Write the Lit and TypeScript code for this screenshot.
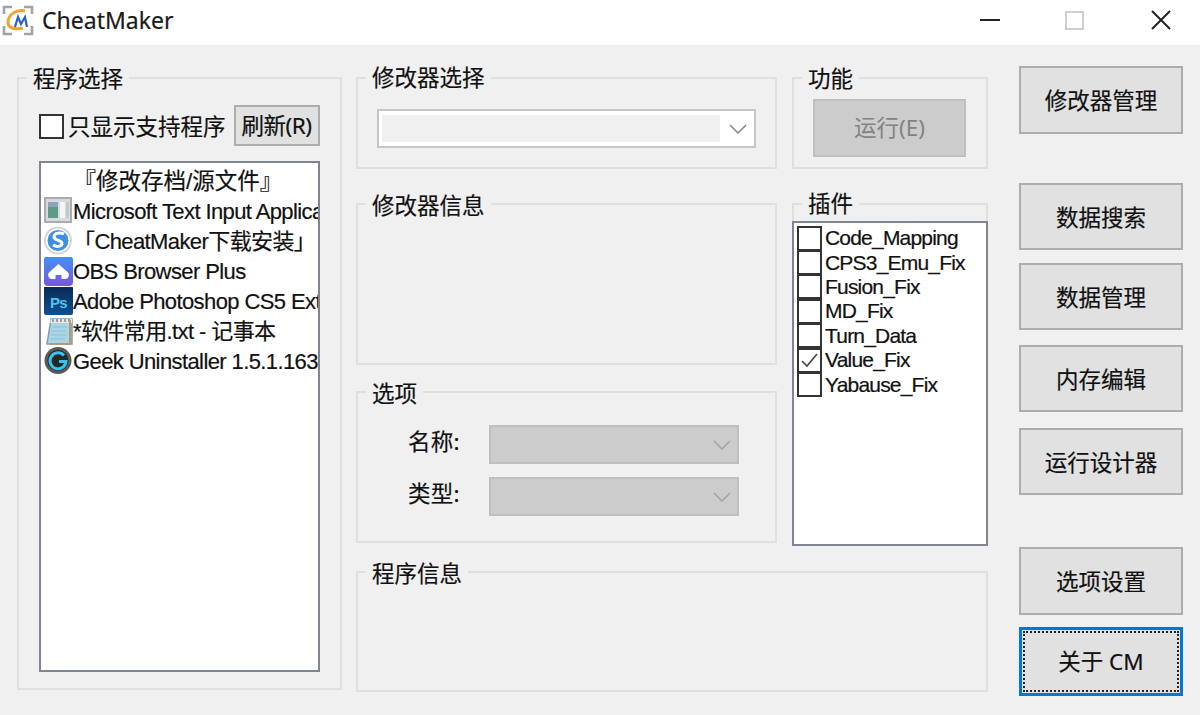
import { LitElement, html, css, svg } from "lit";
import { customElement } from "lit/decorators.js";

const logo = html`<svg class="logo" viewBox="0 0 32 32" width="32" height="32">
  <path d="M2 10V3h8M22 3h8v7M30 22v8h-8M10 30H2v-8" fill="none" stroke="#a3a3a3" stroke-width="2.6"/>
  <path d="M23 7C14 5 6 11 6 18c0 6 6 8 15 6" fill="none" stroke="#f2a32c" stroke-width="3"/>
  <path d="M13 23l3-10 3 7 4-7 2 10" fill="none" stroke="#2d5fc0" stroke-width="2.2"/>
</svg>`;

const icons: Record<string, unknown> = {
  ms: svg`<rect x="1" y="2" width="26" height="24" fill="#d8dadd" stroke="#a9adb2" stroke-width="2"/>
    <rect x="4" y="6" width="10" height="16" fill="#5f9a86"/><rect x="4" y="6" width="10" height="5" fill="#8aa7b8"/>
    <rect x="16" y="6" width="5" height="16" fill="#f4f6f6"/><rect x="22" y="6" width="3" height="16" fill="#c4c8cb"/>`,
  so: svg`<circle cx="14" cy="14.500" r="13" fill="#fff" stroke="#d6d6d6" stroke-width="2"/><circle cx="14" cy="14.500" r="10.500" fill="#3d8fe0"/>
    <path d="M20 8c-4-2-10-1-10 3s9 3 8 7c-1 3-6 3-9 1" fill="none" stroke="#fff" stroke-width="3"/>`,
  obs: svg`<defs><linearGradient id="g1" x1="0" y1="0" x2="0" y2="1"><stop offset="0" stop-color="#3f93f5"/><stop offset="1" stop-color="#7a55e0"/></linearGradient></defs>
    <rect x="0" y="0" width="29" height="30" rx="4" fill="url(#g1)"/>
    <path d="M14.500 8l-9 8a4 4 0 0 0 2 7h4v-4h6v4h4a4 4 0 0 0 2-7z" fill="#fff"/>`,
  ps: svg`<defs><linearGradient id="g2" x1="0" y1="0" x2="0" y2="1"><stop offset="0" stop-color="#072a52"/><stop offset="1" stop-color="#0e4f92"/></linearGradient></defs>
    <rect x="0" y="0" width="29" height="29" rx="2" fill="url(#g2)"/>
    <text x="14.500" y="22" text-anchor="middle" font-family="Liberation Sans" font-weight="700" font-size="15" fill="#52c3f1">Ps</text>`,
  np: svg`<path d="M7 3h21v25H3z" fill="#a9d6e6" stroke="#8a9aa0" stroke-width="1.500"/><path d="M7 3h21v4H6z" fill="#e8e8e8"/>
    <path d="M9 3v3M13 3v3M17 3v3M21 3v3M25 3v3" stroke="#555" stroke-width="1"/>
    <path d="M26 4v24H6" fill="none" stroke="#b89b6c" stroke-width="2"/>
    <path d="M8 11h15M7 15h15M7 19h15M6 23h15" stroke="#8fbfd0" stroke-width="1"/>`,
  g: svg`<circle cx="14" cy="14.500" r="13.500" fill="#5a5a5a"/><circle cx="14" cy="14.500" r="10.500" fill="#262626"/>
    <path d="M20 9.500a8 8 0 1 0 2 6h-7" fill="none" stroke="#35c3f0" stroke-width="3"/>`,
};

const programs = [
  { text: "「CheatMaker下载安装」", icon: "so" },
  { text: "OBS Browser Plus", icon: "obs" },
  { text: "Adobe Photoshop CS5 Extended", icon: "ps" },
  { text: "*软件常用.txt - 记事本", icon: "np" },
  { text: "Geek Uninstaller 1.5.1.163", icon: "g" },
];

const plugins = ["Code_Mapping", "CPS3_Emu_Fix", "Fusion_Fix", "MD_Fix", "Turn_Data", "Value_Fix", "Yabause_Fix"];

const actions = [
  { text: "修改器管理", gap: 0, h: 68 },
  { text: "数据搜索", gap: 49, h: 67 },
  { text: "数据管理", gap: 13, h: 67 },
  { text: "内存编辑", gap: 15, h: 67 },
  { text: "运行设计器", gap: 16, h: 67 },
  { text: "选项设置", gap: 52, h: 68 },
  { text: "关于 CM", gap: 12, h: 69, focus: true },
];

const chevron = html`<svg class="chev" viewBox="0 0 18 10" width="18" height="10"><path d="M1 1l8 8 8-8" fill="none" stroke="currentColor" stroke-width="1.600"/></svg>`;

@customElement("app-root")
export class AppRoot extends LitElement {
  static styles = css`
    :host { display: block; width: 1200px; height: 715px; overflow: hidden; background: #f0f0f0;
      font-family: "Noto Sans", "Noto Sans CJK SC", sans-serif; font-size: 22px; color: #111; line-height: 30px;
      -webkit-text-stroke: 0.2px currentColor; }
    * { box-sizing: border-box; }
    .title { height: 45px; background: #fff; display: flex; align-items: center; padding-left: 2px; }
    .logo { flex: none; margin-top: -5px; }
    .app-name { margin-left: 8px; font-size: 23px; margin-top: -6px; color: #1a1a1a; }
    .win { margin-left: auto; display: flex; align-items: center; margin-top: -5px; }
    .wbtn { display: block; }
    .wmin { margin-right: 65px; }
    .wmax { margin-right: 67px; }
    .wclose { margin-right: 29px; }
    .body { display: flex; padding: 32px 17px 0; height: 670px; }
    .group { position: relative; border: 2px solid #dfdfdf; }
    .legend { position: absolute; left: 8px; top: -15px; padding: 0 6px; background: #f0f0f0; font-size: 22.500px; white-space: nowrap; }
    .legend.hi { top: -16px; }
    .legend.lo { top: -14px; }
    .left { width: 325px; height: 613px; flex: none; padding: 20px 20px 0 20px; }
    .filter { display: flex; align-items: center; height: 41px; margin-top: 6px; }
    .cb { width: 25px; height: 25px; border: 2px solid #333; background: #fff; flex: none; display: block; }
    .filter .cb { margin-top: 1px; }
    .filter-label { margin-left: 4px; font-size: 22.500px; margin-top: 2px; }
    .btn { background: #e1e1e1; border: 2px solid #adadad; display: flex; align-items: center; justify-content: center; font-size: 22.500px; }
    .refresh { width: 86px; height: 41px; margin-left: 8px; white-space: nowrap; letter-spacing: -0.500px; }
    .list { margin-top: 15px; height: 511px; width: 281px; background: #fff; border: 2px solid #80858f; padding-top: 4px; overflow: hidden; }
    .row { height: 30px; display: flex; align-items: center; white-space: nowrap; overflow: hidden; padding-left: 3px;
      font-family: "Liberation Sans", "Noto Sans CJK SC", sans-serif; font-size: 22px; letter-spacing: -0.600px; }
    .row.center { justify-content: center; padding-left: 0; padding-right: 3px; font-size: 22.500px; letter-spacing: 0; }
    .row svg { flex: none; width: 29px; height: 30px; margin-top: -2px; }
    .center-col { width: 632px; margin-left: 14px; flex: none; display: flex; flex-direction: column; }
    .top { display: flex; gap: 15px; height: 469px; }
    .mid { width: 421px; flex: none; display: flex; flex-direction: column; }
    .side { width: 196px; flex: none; display: flex; flex-direction: column; }
    .sel-group { height: 92px; padding: 30px 19px 0; }
    .combo { height: 39px; width: 379px; border: 2px solid #c6c6c6; background: #fff; padding: 3px; display: flex; align-items: center; color: #8a8a8a; }
    .combo-fill { width: 338px; height: 27px; background: #f0f0f0; flex: none; }
    .combo .chev { margin-left: 9px; }
    .info { height: 162px; margin-top: 34px; }
    .options { height: 152px; margin-top: 26px; padding: 32px 0 0 50px; display: flex; flex-direction: column; gap: 13px; }
    .opt { display: flex; align-items: center; height: 39px; }
    .opt-label { width: 81px; font-size: 22.500px; margin-top: -6px; letter-spacing: 0.300px; }
    .disabled-combo { width: 250px; height: 39px; background: #ccc; border: 2px solid #bfbfbf; display: flex; align-items: center; justify-content: flex-end; padding-right: 6px; color: #a5a5a5; }
    .func { height: 92px; padding: 20px 0 0 19px; }
    .run { width: 153px; height: 58px; background: #ccc; border: 2px solid #bfbfbf; color: #838383; -webkit-text-stroke: 0; }
    .plug-wrap { margin-top: 34px; height: 343px; padding-top: 16px; border-bottom: none; }
    .plug-list { margin: 0 -2px; height: 325px; background: #fff; border: 2px solid #80858f; padding: 3px 0 0 3px; }
    .plug { height: 24.400px; display: flex; align-items: center; white-space: nowrap; font-size: 21px; line-height: 24px;
      letter-spacing: -0.800px; font-family: "Liberation Sans", "Noto Sans CJK SC", sans-serif; }
    .plug .cb { margin-right: 3px; }
    .plug .cb svg { display: block; }
    .prog { height: 121px; margin-top: 25px; }
    .actions { width: 164px; margin-left: 31px; margin-top: -11px; flex: none; display: flex; flex-direction: column; }
    .act { width: 164px; flex: none; position: relative; padding-top: 2px; }
    .act.focus { border: 3px solid #0078d7; padding-top: 0; }
    .act.focus::after { content: ""; position: absolute; inset: 1px; border: 2px dotted #222; }
  `;

  render() {
    return html`
      <div class="title">
        ${logo}
        <span class="app-name">CheatMaker</span>
        <div class="win">
          <svg class="wbtn wmin" width="20" height="4" viewBox="0 0 20 4"><path d="M0 2h20" stroke="#222" stroke-width="2"/></svg>
          <svg class="wbtn wmax" width="19" height="19" viewBox="0 0 19 19"><rect x="1" y="1" width="17" height="17" fill="none" stroke="#cfcfcf" stroke-width="2"/></svg>
          <svg class="wbtn wclose" width="20" height="20" viewBox="0 0 20 20"><path d="M1 1l18 18M19 1L1 19" stroke="#222" stroke-width="2"/></svg>
        </div>
      </div>
      <div class="body">
        <section class="group left">
          <span class="legend">程序选择</span>
          <div class="filter">
            <span class="cb"></span>
            <span class="filter-label">只显示支持程序</span>
            <span class="btn refresh">刷新(R)</span>
          </div>
          <div class="list">
            <div class="row center">『修改存档/源文件』</div>
            <div class="row"><svg viewBox="0 0 29 30">${icons.ms}</svg>Microsoft Text Input Application</div>
            ${programs.map((p) => html`<div class="row"><svg viewBox="0 0 29 30">${icons[p.icon]}</svg>${p.text}</div>`)}
          </div>
        </section>
        <div class="center-col">
          <div class="top">
            <div class="mid">
              <section class="group sel-group">
                <span class="legend hi">修改器选择</span>
                <div class="combo"><div class="combo-fill"></div>${chevron}</div>
              </section>
              <section class="group info"><span class="legend lo">修改器信息</span></section>
              <section class="group options">
                <span class="legend lo">选项</span>
                <div class="opt"><span class="opt-label">名称:</span><div class="disabled-combo">${chevron}</div></div>
                <div class="opt"><span class="opt-label">类型:</span><div class="disabled-combo">${chevron}</div></div>
              </section>
            </div>
            <div class="side">
              <section class="group func">
                <span class="legend">功能</span>
                <div class="btn run">运行(E)</div>
              </section>
              <section class="group plug-wrap">
                <span class="legend hi">插件</span>
                <div class="plug-list">
                  ${plugins.map((p) => html`<div class="plug"><span class="cb">${p === "Value_Fix"
                    ? html`<svg viewBox="0 0 21 21" width="21" height="21"><path d="M3 11l5 5 10-12" fill="none" stroke="#444" stroke-width="1.600"/></svg>`
                    : ""}</span>${p}</div>`)}
                </div>
              </section>
            </div>
          </div>
          <section class="group prog"><span class="legend lo">程序信息</span></section>
        </div>
        <div class="actions">
          ${actions.map((a) => html`<div class="btn act ${a.focus ? "focus" : ""}" style="margin-top:${a.gap}px;height:${a.h}px">${a.text}</div>`)}
        </div>
      </div>
    `;
  }
}
